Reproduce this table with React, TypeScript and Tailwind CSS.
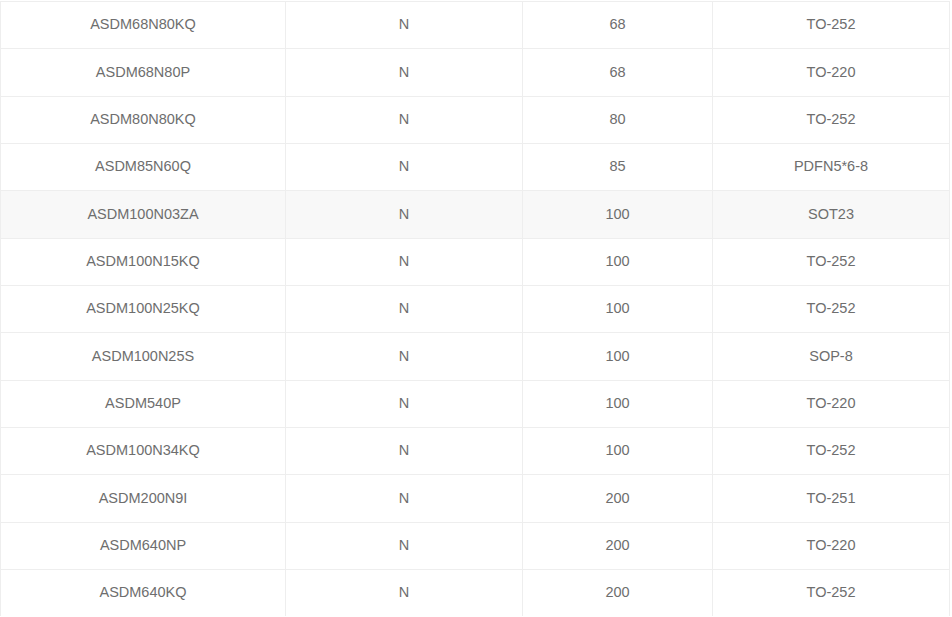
import React from "react";

const rows: [string, string, string, string][] = [
  ["ASDM68N80KQ", "N", "68", "TO-252"],
  ["ASDM68N80P", "N", "68", "TO-220"],
  ["ASDM80N80KQ", "N", "80", "TO-252"],
  ["ASDM85N60Q", "N", "85", "PDFN5*6-8"],
  ["ASDM100N03ZA", "N", "100", "SOT23"],
  ["ASDM100N15KQ", "N", "100", "TO-252"],
  ["ASDM100N25KQ", "N", "100", "TO-252"],
  ["ASDM100N25S", "N", "100", "SOP-8"],
  ["ASDM540P", "N", "100", "TO-220"],
  ["ASDM100N34KQ", "N", "100", "TO-252"],
  ["ASDM200N9I", "N", "200", "TO-251"],
  ["ASDM640NP", "N", "200", "TO-220"],
  ["ASDM640KQ", "N", "200", "TO-252"],
];

export default function App() {
  return (
    <div className="w-[952px] h-[617px] overflow-hidden bg-white pt-px font-['Liberation_Sans',Arial,sans-serif] text-[14.5px] text-[#6e6e6e]">
      <div className="w-[950px] border-r border-[#eee]">
        {rows.map((r, i) => (
          <div
            key={i}
            className={`grid grid-cols-[285px_237px_190px_237px] h-[47.33px] border-t border-[#eee] ${
              i === 4 ? "bg-[#f8f8f8]" : "bg-white"
            }`}
          >
            {r.map((c, j) => (
              <div key={j} className="flex items-center justify-center border-l border-[#eee]">
                {c}
              </div>
            ))}
          </div>
        ))}
      </div>
    </div>
  );
}
